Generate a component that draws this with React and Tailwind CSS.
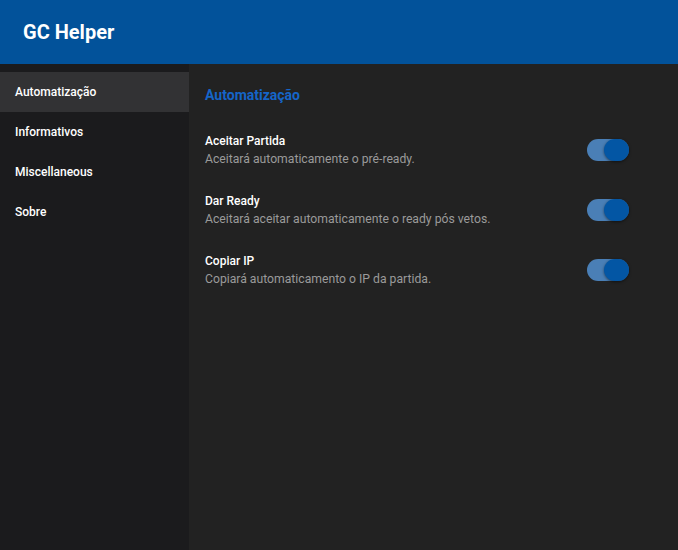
import React, { useState } from 'react';

const menu = ['Automatização', 'Informativos', 'Miscellaneous', 'Sobre'];

const settings = [
    { title: 'Aceitar Partida', desc: 'Aceitará automaticamente o pré-ready.' },
    { title: 'Dar Ready', desc: 'Aceitará aceitar automaticamente o ready pós vetos.' },
    { title: 'Copiar IP', desc: 'Copiará automaticamento o IP da partida.' },
];

const Toggle = ({ on, onClick }) => (
    <button
        type="button"
        onClick={onClick}
        className={`relative h-[22px] w-[42px] rounded-full ${on ? 'bg-[#4a7fb6]' : 'bg-[#555]'}`}
    >
        <span
            className={`absolute top-0 h-[22px] w-[25px] rounded-full shadow-[0_1px_3px_rgba(0,0,0,0.5)] ${on ? 'right-0 bg-[#0356a4]' : 'left-0 bg-[#ccc]'}`}
        />
    </button>
);

export default function App() {
    const [active, setActive] = useState(0);
    const [values, setValues] = useState([true, true, true]);

    return (
        <div className="flex h-[550px] w-[678px] flex-col overflow-hidden font-['Roboto',sans-serif]">
            <header className="flex h-16 shrink-0 items-center bg-[#02529a] px-[23px]">
                <h1 className="text-[20px] font-bold text-white">GC Helper</h1>
            </header>
            <div className="flex flex-1">
                <nav className="w-[189px] shrink-0 bg-[#1b1b1d] pt-2">
                    {menu.map((m, i) => (
                        <button
                            type="button"
                            key={m}
                            onClick={() => setActive(i)}
                            className={`flex h-10 w-full items-center px-[15px] text-left text-[12px] font-medium text-white ${active === i ? 'bg-[#323234]' : ''}`}
                        >
                            {m}
                        </button>
                    ))}
                </nav>
                <main className="flex-1 bg-[#222222] px-4 pt-[22px]">
                    <h2 className="text-[14px] font-bold leading-[18px] text-[#1565c8]">Automatização</h2>
                    <div className="mt-[26px] flex flex-col gap-[20px] pr-[33px]">
                        {settings.map((s, i) => (
                            <div key={s.title} className="flex h-10 items-center justify-between">
                                <div className="flex flex-col">
                                    <span className="text-[12px] font-medium leading-[18px] text-white">{s.title}</span>
                                    <span className="text-[12.2px] leading-[18px] text-[#9a9a9a]">{s.desc}</span>
                                </div>
                                <Toggle
                                    on={values[i]}
                                    onClick={() => setValues(values.map((v, j) => (j === i ? !v : v)))}
                                />
                            </div>
                        ))}
                    </div>
                </main>
            </div>
        </div>
    );
}
